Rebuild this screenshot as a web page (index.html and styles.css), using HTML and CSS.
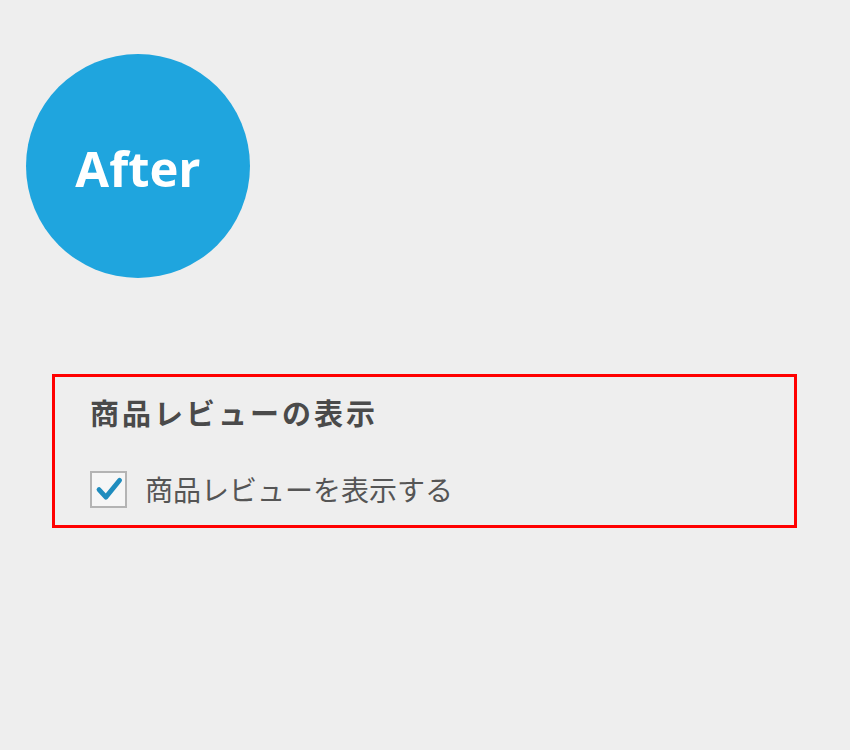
FILE: index.html
```html
<!DOCTYPE html>
<html lang="ja">
<head>
    <meta charset="UTF-8">
    <title>After</title>
    <link rel="stylesheet" href="styles.css">
</head>
<body>
    <div class="badge">After</div>

    <section class="setting">
        <h2>商品レビューの表示</h2>
        <label class="option">
            <span class="checkbox">
                <svg viewBox="0 0 24 24" width="30" height="30">
                    <path d="M4 12.5 L9.5 18.5 L20.5 5" fill="none" stroke="#1e8cbe" stroke-width="3.8" stroke-linecap="round" stroke-linejoin="round"/>
                </svg>
            </span>
            <span class="text">商品レビューを表示する</span>
        </label>
    </section>
</body>
</html>
```

FILE: styles.css
```css
* {
    margin: 0;
    padding: 0;
    box-sizing: border-box;
}

body {
    width: 850px;
    height: 750px;
    background-color: #eeeeee;
    font-family: "Noto Sans CJK JP", "Noto Sans", sans-serif;
    padding: 54px 0 0 26px;
}

.badge {
    width: 224px;
    height: 224px;
    border-radius: 50%;
    background-color: #1fa5de;
    color: #ffffff;
    font-family: "Open Sans", "Noto Sans", sans-serif;
    font-weight: 700;
    font-size: 49px;
    display: flex;
    align-items: center;
    justify-content: center;
    padding-top: 4px;
}

.setting {
    width: 745px;
    height: 154px;
    margin: 96px 0 0 26px;
    border: 3px solid #ff0000;
    padding: 13px 0 0 35px;
}

h2 {
    font-size: 29px;
    font-weight: 700;
    letter-spacing: 3px;
    color: #4a4a4a;
    line-height: 44px;
}

.option {
    display: flex;
    align-items: center;
    gap: 18px;
    margin-top: 35px;
}

.checkbox {
    width: 37px;
    height: 37px;
    border: 2px solid #b4b4b4;
    background-color: #f6f6f6;
    display: flex;
    align-items: center;
    justify-content: center;
}

.text {
    font-size: 28px;
    color: #555555;
    line-height: 40px;
}
```
